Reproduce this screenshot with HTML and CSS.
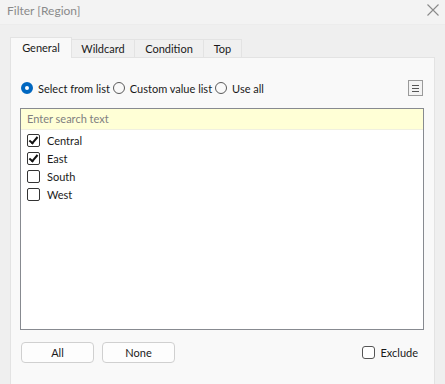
FILE: index.html
```html
<!DOCTYPE html>
<html>
<head>
    <meta name="viewport" content="width=device-width, initial-scale=1.0">
    <title>Filter [Region]</title>
    <link rel="stylesheet" href="styles.css">
</head>
<body>
    <!-- Window title -->
    <div class="titlebar">
        <span class="title">Filter [Region]</span>
        <svg class="close" width="12" height="12" viewBox="0 0 12 12">
            <path d="M0.5 0.5 L11.5 11.5 M11.5 0.5 L0.5 11.5" stroke="#8a8a8a" stroke-width="1.1" fill="none"/>
        </svg>
    </div>

    <div class="dialog">
        <!-- Tabs -->
        <div class="tabs">
            <div class="tab active">General</div>
            <div class="tab wide">Wildcard</div>
            <div class="tab wider">Condition</div>
            <div class="tab narrow">Top</div>
        </div>

        <div class="panel">
            <!-- Mode choice -->
            <div class="mode-row">
                <label class="radio checked"><span class="dot"></span>Select from list</label>
                <label class="radio"><span class="dot"></span>Custom value list</label>
                <label class="radio"><span class="dot"></span>Use all</label>
                <div class="menu-btn">
                    <span></span><span></span><span></span>
                </div>
            </div>

            <!-- Search and values -->
            <div class="listbox">
                <div class="search">Enter search text</div>
                <div class="items">
                    <div class="item"><span class="box on"></span>Central</div>
                    <div class="item"><span class="box on"></span>East</div>
                    <div class="item"><span class="box"></span>South</div>
                    <div class="item"><span class="box"></span>West</div>
                </div>
            </div>

            <!-- Bottom buttons -->
            <div class="actions">
                <button type="button" class="btn">All</button>
                <button type="button" class="btn">None</button>
                <label class="exclude"><span class="box small"></span>Exclude</label>
            </div>
        </div>
    </div>
</body>
</html>
```

FILE: styles.css
```css
body, html {
    margin: 0;
    height: 100%;
}

body {
    background-color: #efefef;
    font-family: Lato, "Noto Sans", sans-serif;
    font-size: 11px;
    color: #1a1a1a;
    overflow: hidden;
}

/* Title bar */
.titlebar {
    height: 25px;
    display: flex;
    align-items: center;
    justify-content: space-between;
    padding: 0 6px 0 7px;
    background-color: #f3f3f3;
    border-bottom: 1px solid #ececec;
    box-sizing: border-box;
}

.title {
    color: #8a8a8a;
    font-size: 12px;
    margin-top: -4px;
}

.close {
    margin-top: -4px;
}

/* Tabs and panel */
.dialog {
    padding: 12px 10px 0 10px;
}

.tabs {
    display: flex;
    align-items: flex-end;
    height: 20px;
}

.tab {
    width: 64px;
    height: 18px;
    line-height: 17px;
    text-align: center;
    border: 1px solid #e3e3e3;
    border-bottom: none;
    background-color: #f0f0f0;
    box-sizing: border-box;
    margin-left: -1px;
}

.tab.wider { width: 70px; }
.tab.narrow { width: 39px; }

.tab.active {
    width: 62px;
    height: 21px;
    line-height: 19px;
    margin-left: 0;
    background-color: #f9f9f9;
    position: relative;
    z-index: 1;
    margin-bottom: -1px;
}

.panel {
    height: 320px;
    background-color: #f9f9f9;
    border: 1px solid #e3e3e3;
    padding: 22px 10px 0 10px;
}

.mode-row {
    display: flex;
    align-items: center;
    height: 16px;
}

.radio {
    display: flex;
    align-items: center;
    margin-right: 3px;
}

.radio .dot {
    width: 10px;
    height: 10px;
    border: 1px solid #5a5a5a;
    border-radius: 50%;
    margin-right: 5px;
    box-sizing: content-box;
}

.radio.checked .dot {
    width: 4px;
    height: 4px;
    border: 4px solid #0067c0;
    background-color: #fff;
}

.menu-btn {
    margin-left: auto;
    margin-right: 1px;
    width: 13px;
    height: 14px;
    border: 1px solid #9a9a9a;
    background-color: #f3f3f3;
    display: flex;
    flex-direction: column;
    justify-content: center;
    align-items: center;
    gap: 2px;
}

.menu-btn span {
    width: 7px;
    height: 1px;
    background-color: #555;
}

/* List box */
.listbox {
    margin-top: 12px;
    margin-left: -1px;
    height: 222px;
    border: 1px solid #878a90;
    background-color: #fff;
    box-sizing: border-box;
    display: flex;
    flex-direction: column;
}

.search {
    height: 21px;
    line-height: 20px;
    padding-left: 6px;
    background-color: #ffffd6;
    border-bottom: 1px solid #f0f0e0;
    color: #808080;
    box-sizing: border-box;
}

.items {
    padding: 1px 0 0 6px;
}

.item {
    height: 18px;
    display: flex;
    align-items: center;
}

.box {
    width: 11px;
    height: 11px;
    border: 1px solid #333;
    border-radius: 2px;
    margin-right: 7px;
    position: relative;
    background-color: #fff;
}

.box.on::after {
    content: "";
    position: absolute;
    left: 3px;
    top: 0px;
    width: 3px;
    height: 7px;
    border: solid #111;
    border-width: 0 2px 2px 0;
    transform: rotate(40deg);
}

.box.small {
    border-color: #555;
    border-radius: 3px;
    margin-right: 5px;
}

/* Buttons */
.actions {
    margin-top: 12px;
    display: flex;
    align-items: center;
}

.btn {
    width: 73px;
    height: 21px;
    margin-right: 8px;
    border: 1px solid #d0d0d0;
    border-radius: 4px;
    background-color: #fdfdfd;
    font-family: Lato, "Noto Sans", sans-serif;
    font-size: 11px;
    color: #1a1a1a;
    padding: 0;
}

.exclude {
    margin-left: auto;
    margin-right: 6px;
    display: flex;
    align-items: center;
}
```
